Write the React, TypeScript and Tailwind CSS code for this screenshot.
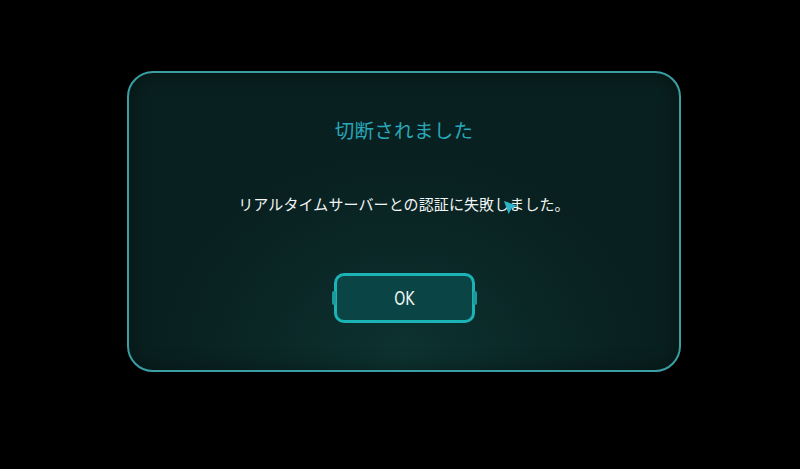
export default function App() {
    return (
        <div className="w-[800px] h-[469px] bg-black overflow-hidden pt-[71px] pl-[127px]" style={{fontFamily: '"Noto Sans CJK JP", "Noto Sans", sans-serif'}}>
            <div className="relative w-[554px] h-[301px] rounded-[26px] border-2 border-[#3a9ea3] bg-[radial-gradient(ellipse_45%_70%_at_50%_95%,#0d3331_0%,#0a2726_55%,#08201f_100%)] shadow-[inset_0_0_20px_rgba(0,0,0,0.4)] flex flex-col items-center">
                <h2 className="mt-[43px] text-[19.5px] leading-[28px] text-[#2aa6b8] tracking-[0.3px]">切断されました</h2>
                <p className="mt-[49px] text-[15px] leading-[22px] text-[#f2f5f5] tracking-[0.1px]">リアルタイムサーバーとの認証に失敗しました。</p>
                <button className="relative mt-[58px] w-[141px] h-[50px] rounded-[10px] border-[3px] border-[#1bb3b6] bg-[#0a4444] text-[#eef6f6] text-[19px] leading-none" style={{fontFamily: '"DejaVu Sans Condensed", "DejaVu Sans", sans-serif'}}>
                    <span className="absolute left-[-5px] top-[15px] w-[4px] h-[14px] rounded-[2px] bg-[#1a9a9c]"></span>
                    <span className="inline-block scale-x-[0.82]">OK</span>
                    <span className="absolute right-[-5px] top-[15px] w-[4px] h-[14px] rounded-[2px] bg-[#1a9a9c]"></span>
                </button>
                <svg className="absolute left-[374px] top-[127px]" width="15" height="15" viewBox="0 0 16 16">
                    <path d="M1 1 L15 6 L9 9 L6 15 Z" fill="#2fb3c8" />
                </svg>
            </div>
        </div>
    );
}
